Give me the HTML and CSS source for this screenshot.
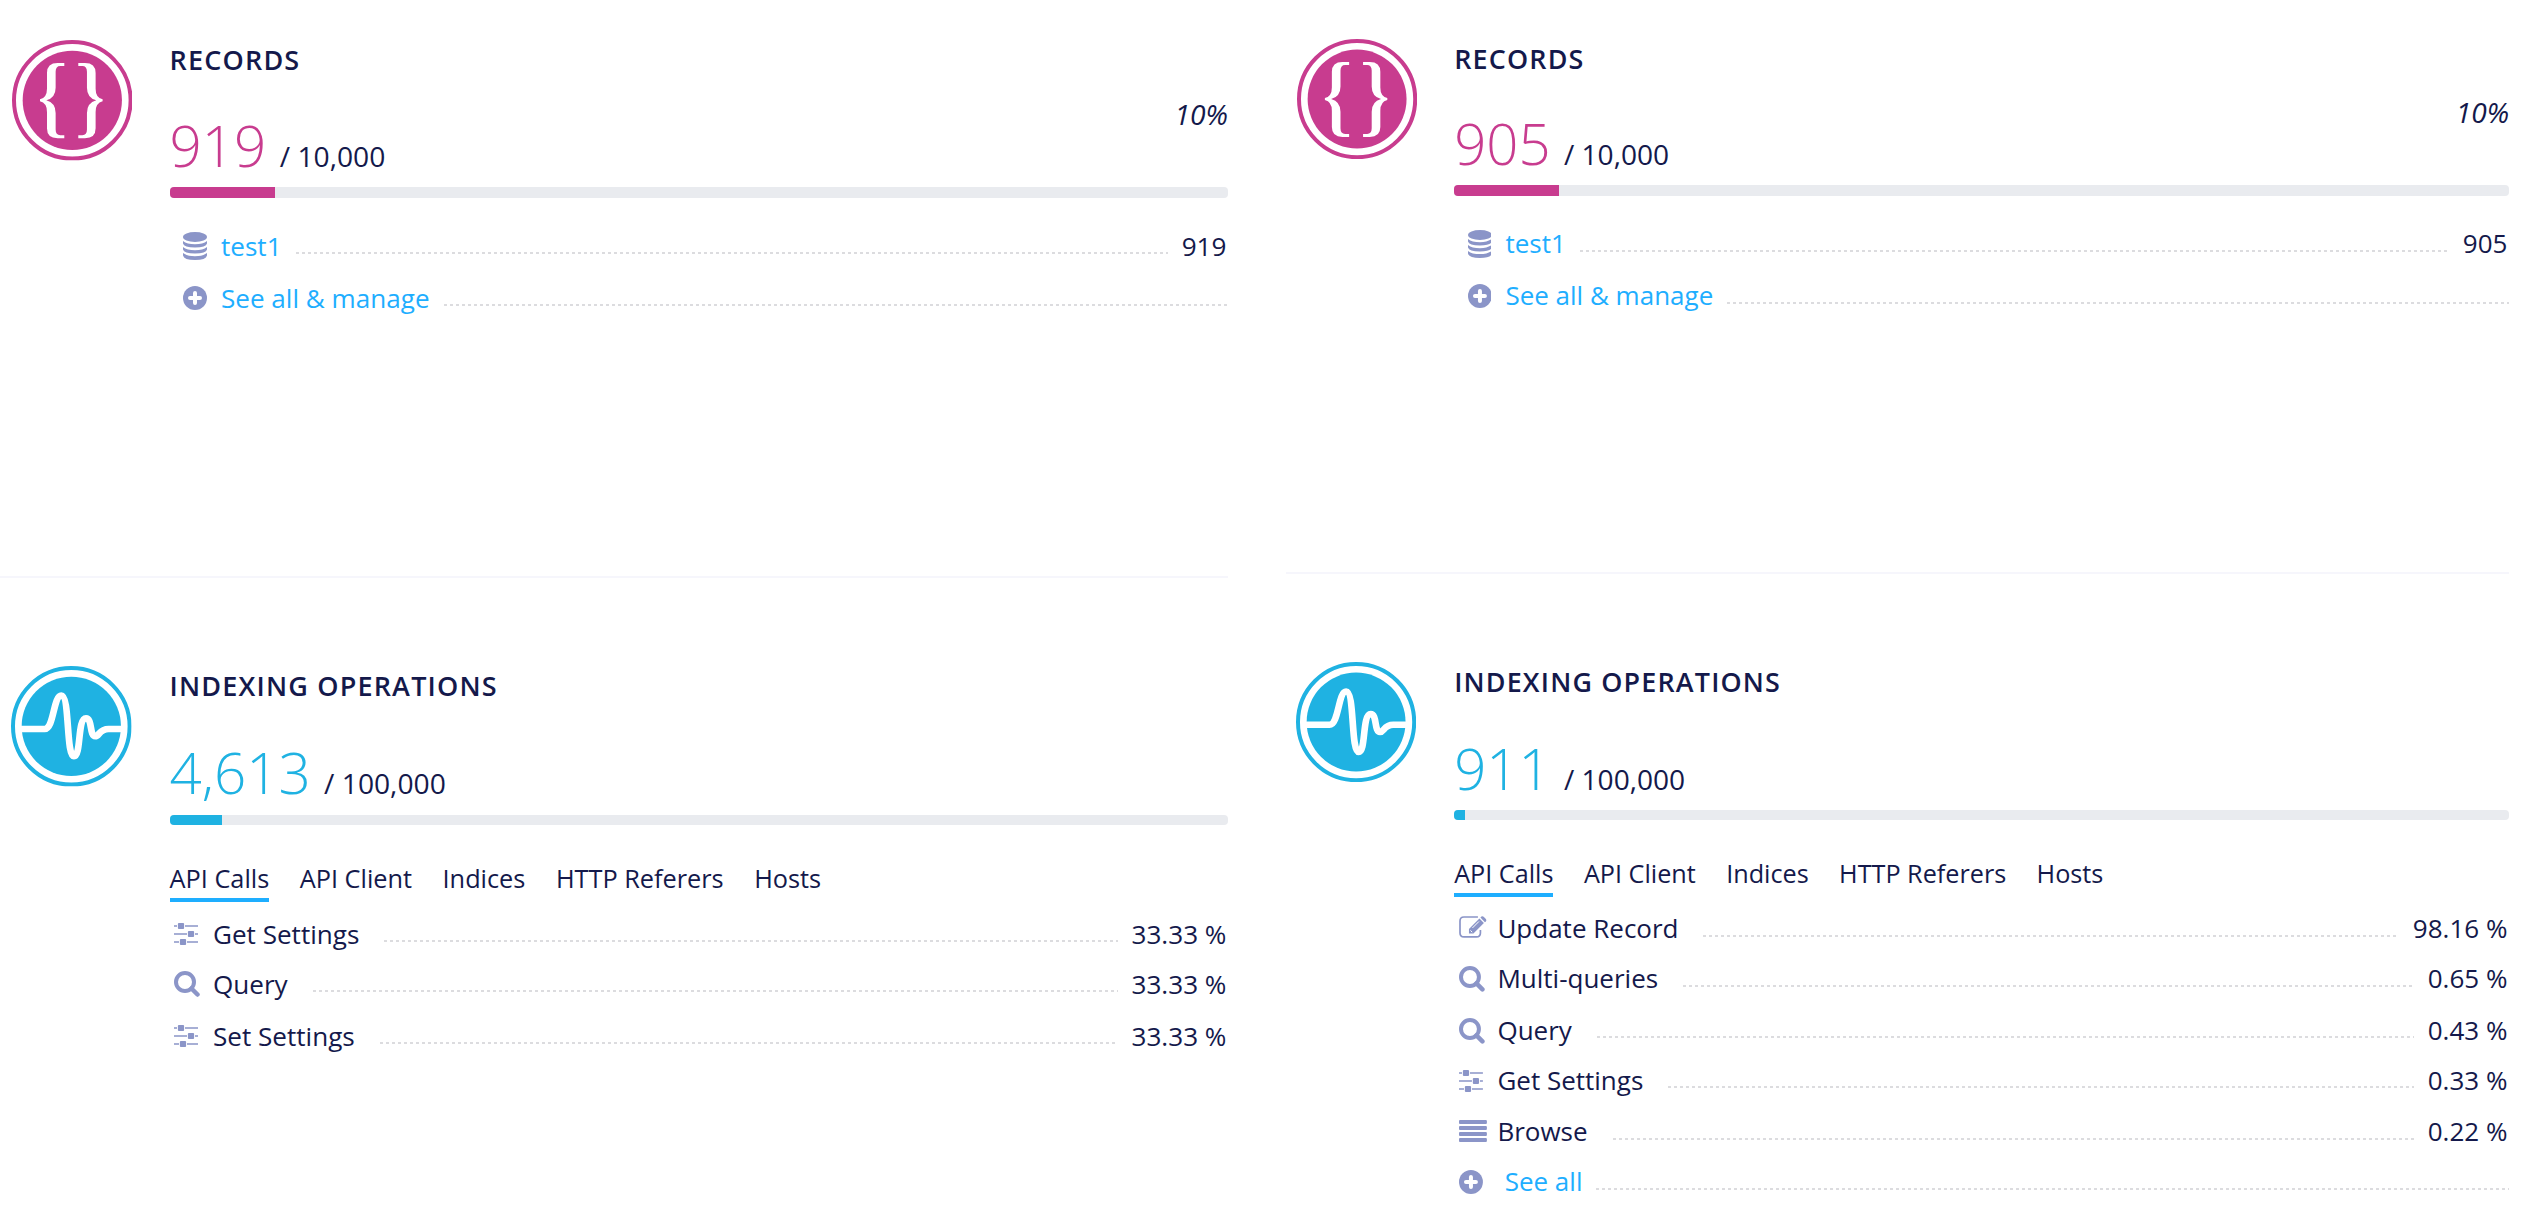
FILE: index.html
```html
<!DOCTYPE html>
<html lang="en">
<head>
<meta charset="utf-8">
<title>Usage</title>
<link rel="stylesheet" href="styles.css">
</head>
<body>
<svg class="defs" aria-hidden="true">
  <symbol id="braces" viewBox="-181 -181 362 362">
    <circle r="175" fill="none" stroke="currentColor" stroke-width="12"/>
    <circle r="149" fill="currentColor"/>
    <path id="brace" fill="#fff" d="M-24-112H-44Q-76-112-76-82V-35Q-76-8-97-3V3Q-76 8-76 35V84Q-76 114-44 114H-24V105H-36Q-50 105-50 88V38Q-50 8-78 0Q-50-8-50-38V-86Q-50-103-36-103H-24Z"/>
    <use href="#brace" transform="scale(-1 1) translate(6 0)"/>
  </symbol>
  <symbol id="pulse" viewBox="-181 -181 362 362">
    <circle r="175" fill="none" stroke="currentColor" stroke-width="12"/>
    <circle r="149" fill="currentColor"/>
    <path fill="none" stroke="#fff" stroke-width="20" d="M-152 8H-80C-52 8-54-92-30-92C-4-92-16 90 8 90C30 90 18-24 44-24C64-24 54 30 72 30C84 30 84 8 112 8H152"/>
  </symbol>
  <symbol id="database" viewBox="0 0 24 28">
    <ellipse cx="12" cy="5" rx="12" ry="5"/>
    <path d="M0 9Q4 12.200 12 12.200T24 9V11.500Q23 15.500 12 15.500T0 11.500ZM0 15Q4 18.200 12 18.200T24 15V17.500Q23 21.500 12 21.500T0 17.500ZM0 21Q4 24.200 12 24.200T24 21V23.500Q23 28 12 28T0 23.500Z"/>
  </symbol>
  <symbol id="plus" viewBox="0 0 24 24">
    <circle cx="12" cy="12" r="12"/>
    <path stroke="#fff" stroke-width="4" stroke-linecap="round" d="M7 12H17M12 7V17"/>
  </symbol>
  <symbol id="sliders" viewBox="0 0 24 22">
    <path d="M0 2.200H3V3.800H0ZM11 2.200H24V3.800H11ZM0 10.200H13V11.800H0ZM21 10.200H24V11.800H21ZM0 18.200H5V19.800H0ZM13 18.200H24V19.800H13Z"/>
    <rect x="3.900" y="0" width="6.200" height="6" rx="1"/>
    <rect x="13.900" y="8" width="6.200" height="6" rx="1"/>
    <rect x="5.900" y="16" width="6.200" height="6" rx="1"/>
  </symbol>
  <symbol id="search" viewBox="0 0 26 26">
    <g fill="none" stroke="currentColor"><circle cx="11" cy="11" r="9" stroke-width="4"/><path stroke-width="4.500" stroke-linecap="round" d="M17.500 17.500L23.500 23.500"/></g>
  </symbol>
  <symbol id="edit" viewBox="0 0 28 22">
    <path fill="none" stroke="currentColor" stroke-width="1.700" d="M19 1H5Q1 1 1 5V17Q1 21 5 21H17.500Q21.500 21 21.500 17V14"/>
    <path d="M10 13L20.500 2.500L25 7L14.500 17.500H10ZM21.500 1.500L22.500.5Q24 0 25 1L27 3Q28 4.500 27 5.500L26 6.300Z"/>
    <path stroke="#fff" d="M13.500 12L20 5.500M11.500 14.500L13.200 16.200"/>
  </symbol>
  <symbol id="list" viewBox="0 0 28 22">
    <path d="M1 0H27Q28 0 28 1V3Q28 4 27 4H1Q0 4 0 3V1Q0 0 1 0ZM1 6H27Q28 6 28 7V9Q28 10 27 10H1Q0 10 0 9V7Q0 6 1 6ZM1 12H27Q28 12 28 13V15Q28 16 27 16H1Q0 16 0 15V13Q0 12 1 12ZM1 18H27Q28 18 28 19V21Q28 22 27 22H1Q0 22 0 21V19Q0 18 1 18Z"/>
  </symbol>
</svg>
<main class="dashboard">
  <div class="panel">
    <section class="card records">
      <svg class="badge"><use href="#braces"/></svg>
      <div class="body">
        <h2>RECORDS</h2>
        <div class="figures"><span class="used">919</span><span class="limit">/ 10,000</span><em>10%</em></div>
        <div class="bar"><div class="fill" style="width:9.92%"></div></div>
        <ul class="rows">
          <li><svg class="icon i-db"><use href="#database"/></svg><a>test1</a><i></i><b>919</b></li>
          <li><svg class="icon i-plus"><use href="#plus"/></svg><a>See all &amp; manage</a><i></i></li>
        </ul>
      </div>
    </section>
    <section class="card indexing">
      <svg class="badge"><use href="#pulse"/></svg>
      <div class="body">
        <h2>INDEXING OPERATIONS</h2>
        <div class="figures"><span class="used">4,613</span><span class="limit">/ 100,000</span></div>
        <div class="bar"><div class="fill" style="width:4.92%"></div></div>
        <nav><span class="on">API Calls</span><span>API Client</span><span>Indices</span><span>HTTP Referers</span><span>Hosts</span></nav>
        <ul class="rows">
          <li><svg class="icon i-set"><use href="#sliders"/></svg><span>Get Settings</span><i></i><b>33.33 %</b></li>
          <li><svg class="icon i-search"><use href="#search"/></svg><span>Query</span><i></i><b>33.33 %</b></li>
          <li><svg class="icon i-set"><use href="#sliders"/></svg><span>Set Settings</span><i></i><b>33.33 %</b></li>
        </ul>
      </div>
    </section>
  </div>
  <div class="panel compact">
    <section class="card records">
      <svg class="badge"><use href="#braces"/></svg>
      <div class="body">
        <h2>RECORDS</h2>
        <div class="figures"><span class="used">905</span><span class="limit">/ 10,000</span><em>10%</em></div>
        <div class="bar"><div class="fill" style="width:9.92%"></div></div>
        <ul class="rows">
          <li><svg class="icon i-db"><use href="#database"/></svg><a>test1</a><i></i><b>905</b></li>
          <li><svg class="icon i-plus"><use href="#plus"/></svg><a>See all &amp; manage</a><i></i></li>
        </ul>
      </div>
    </section>
    <section class="card indexing">
      <svg class="badge"><use href="#pulse"/></svg>
      <div class="body">
        <h2>INDEXING OPERATIONS</h2>
        <div class="figures"><span class="used">911</span><span class="limit">/ 100,000</span></div>
        <div class="bar"><div class="fill" style="width:0.98%"></div></div>
        <nav><span class="on">API Calls</span><span>API Client</span><span>Indices</span><span>HTTP Referers</span><span>Hosts</span></nav>
        <ul class="rows">
          <li><svg class="icon i-edit"><use href="#edit"/></svg><span>Update Record</span><i></i><b>98.16 %</b></li>
          <li><svg class="icon i-search"><use href="#search"/></svg><span>Multi-queries</span><i></i><b>0.65 %</b></li>
          <li><svg class="icon i-search"><use href="#search"/></svg><span>Query</span><i></i><b>0.43 %</b></li>
          <li><svg class="icon i-set"><use href="#sliders"/></svg><span>Get Settings</span><i></i><b>0.33 %</b></li>
          <li><svg class="icon i-list"><use href="#list"/></svg><span>Browse</span><i></i><b>0.22 %</b></li>
          <li><svg class="icon i-plus"><use href="#plus"/></svg><a>See all</a><i></i></li>
        </ul>
      </div>
    </section>
  </div>
</main>
</body>
</html>
```
FILE: styles.css
```css
* { box-sizing: border-box; }
body { margin: 0; background: #fff; color: #14194b; font-family: "Open Sans", sans-serif; }
.defs { display: none; }
.dashboard { display: flex; gap: 58px; height: 1230px; overflow: hidden; }
.panel { --u: 1px; width: 1228px; font-size: calc(26.100 * var(--u)); line-height: calc(50 * var(--u)); white-space: nowrap; }
.panel.compact { --u: .9966px; width: 1223px; }
.card { display: flex; padding-left: calc(11.800 * var(--u)); }
.records { height: calc(578 * var(--u)); padding-top: calc(40.300 * var(--u)); border-bottom: 2px solid #f6f6fc; color: #c83c8f; }
.indexing { padding-top: calc(88 * var(--u)); padding-left: calc(11.200 * var(--u)); color: #1fb2e2; }
.compact .records { padding-top: 39px; padding-left: 11px; height: 574px; }
.compact .indexing { padding-top: 88px; padding-left: 10.200px; }
.badge { width: calc(120.600 * var(--u)); height: calc(120.600 * var(--u)); flex: none; }
.body { flex: 1; margin-left: calc(37.200 * var(--u)); }
.indexing .body { margin-left: calc(37.800 * var(--u)); }
.compact .body { margin-left: 37px; }
.compact .indexing .body { margin-left: 37.800px; }
h2 { margin: 0; font-size: calc(27 * var(--u)); font-weight: 600; letter-spacing: calc(1.180 * var(--u)); line-height: calc(40 * var(--u)); color: #14194b; }
.figures { display: flex; align-items: baseline; height: calc(107 * var(--u)); line-height: calc(76 * var(--u)); padding-top: calc(27.500 * var(--u)); }
.indexing .figures { height: calc(108.500 * var(--u)); padding-top: calc(29.200 * var(--u)); }
.used { font-size: calc(56.500 * var(--u)); font-weight: 300; }
.limit { margin-left: calc(13.400 * var(--u)); font-size: calc(28.200 * var(--u)); color: #14194b; }
.figures em { margin-left: auto; font-size: calc(28.200 * var(--u)); color: #14194b; position: relative; top: calc(-42 * var(--u)); }
.bar { height: calc(10.400 * var(--u)); border-radius: 4px; overflow: hidden; background: #e9ebef; }
.fill { height: 100%; background: currentColor; }
.rows { list-style: none; margin: 0; padding: 0; color: #14194b; }
.rows li { display: flex; height: calc(50.200 * var(--u)); }
.rows li:nth-child(even) { height: calc(52 * var(--u)); }
.records .rows { padding: calc(23 * var(--u)) 0 0 calc(13.400 * var(--u)); }
.records .rows li { height: calc(52.200 * var(--u)); }
.rows a { color: #1eaeff; margin-left: calc(14 * var(--u)); }
.rows span { margin-left: calc(12.700 * var(--u)); }
.rows b { font-weight: 400; margin-left: calc(14 * var(--u)); padding-right: calc(1.600 * var(--u)); }
.rows i { flex: 1; height: 2px; margin: calc(31 * var(--u)) 0 0 calc(14 * var(--u)); background: repeating-linear-gradient(90deg, #dcdcdf 0 3px, transparent 3px 6px); }
.rows span + i { margin-left: calc(25 * var(--u)); }
.icon { flex: none; color: #8b95c8; fill: currentColor; align-self: flex-start; }
.i-db { width: calc(24 * var(--u)); height: calc(28 * var(--u)); margin-top: calc(11 * var(--u)); }
.i-plus { width: calc(24 * var(--u)); height: calc(24 * var(--u)); margin-top: calc(13 * var(--u)); }
.i-set { width: calc(24 * var(--u)); height: calc(22 * var(--u)); margin: calc(14.300 * var(--u)) calc(2 * var(--u)) 0 0; }
.i-search { width: calc(26 * var(--u)); height: calc(26 * var(--u)); margin-top: calc(12.500 * var(--u)); }
.i-edit, .i-list { width: calc(28 * var(--u)); height: calc(22 * var(--u)); margin: calc(12.500 * var(--u)) calc(-2 * var(--u)) 0 0; }
.indexing .rows { padding: calc(6.700 * var(--u)) 0 0 calc(4.700 * var(--u)); }
.indexing .i-plus { margin-right: calc(8 * var(--u)); }
nav { display: flex; gap: calc(30.500 * var(--u)); margin-top: calc(34 * var(--u)); font-size: calc(25.300 * var(--u)); line-height: calc(38.500 * var(--u)); color: #14194b; }
nav span { height: calc(43 * var(--u)); }
nav .on { border-bottom: calc(4.500 * var(--u)) solid #1eaeff; }
```
